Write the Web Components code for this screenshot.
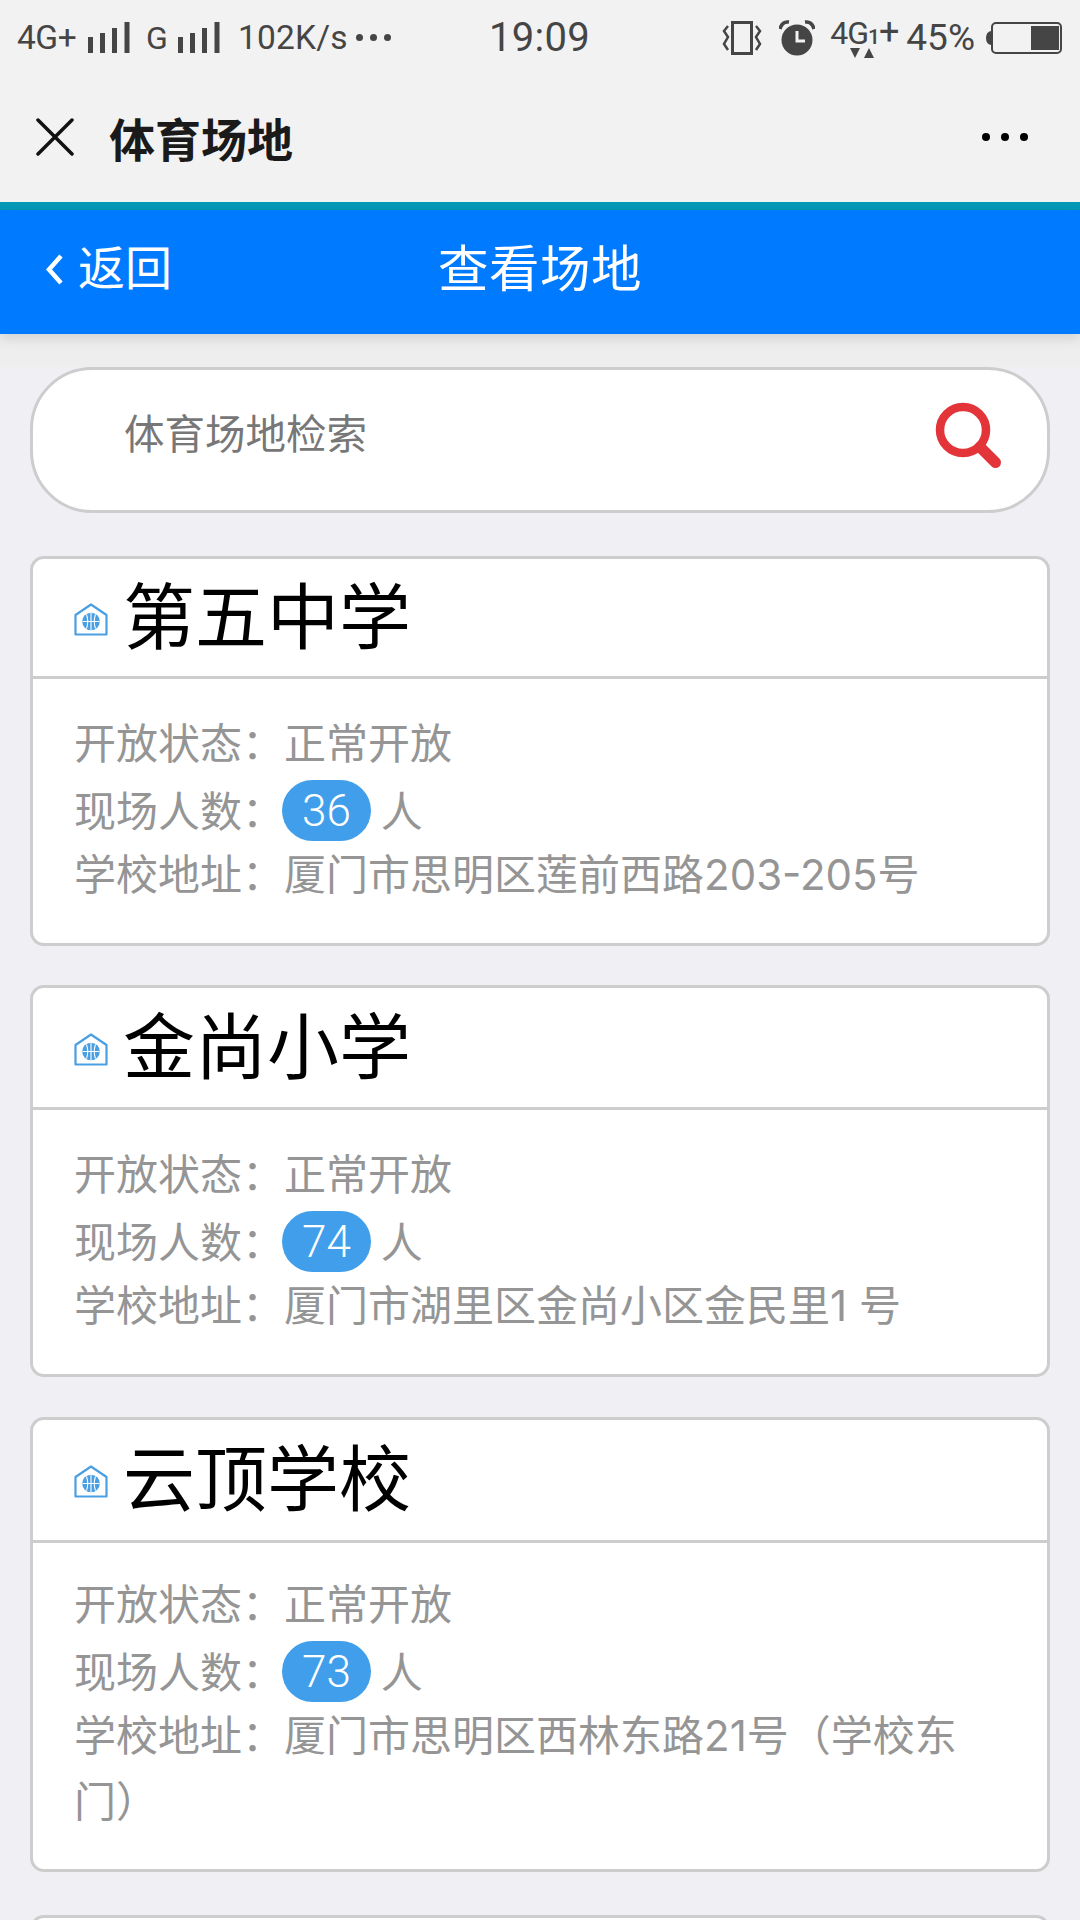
<!DOCTYPE html>
<html lang="zh-CN">
<head>
<meta charset="utf-8">
<title>体育场地</title>
<style>
  html,body{margin:0;padding:0;background:#efeff4;}
  body{width:1080px;height:1920px;overflow:hidden;font-family:"Noto Sans CJK SC","Noto Sans",sans-serif;}
</style>
</head>
<body>
<app-shell>
  <status-bar></status-bar>
  <wx-nav>体育场地</wx-nav>
  <page-header back="返回">查看场地</page-header>
  <venue-list>
    <search-box placeholder="体育场地检索"></search-box>
    <venue-card count="36" head="117" pad="29" end="37">
      <span slot="name">第五中学</span>
      <span slot="address">厦门市思明区莲前西路203-205号</span>
    </venue-card>
    <venue-card count="74" head="119" pad="29" end="37" style="margin-bottom:1px">
      <span slot="name">金尚小学</span>
      <span slot="address">厦门市湖里区金尚小区金民里1 号</span>
    </venue-card>
    <venue-card count="73" head="120" pad="26" end="36" style="margin-bottom:4px">
      <span slot="name">云顶学校</span>
      <span slot="address">厦门市思明区西林东路21号（学校东门）</span>
    </venue-card>
    <venue-card blank head="117"></venue-card>
  </venue-list>
</app-shell>
<script>
function define(name, html){
  customElements.define(name, class extends HTMLElement{
    constructor(){
      super();
      const root=this.attachShadow({mode:'open'});
      root.innerHTML=typeof html==='function'?html(this):html;
    }
  });
}
define('app-shell',`<style>:host{display:flex;flex-direction:column;width:1080px;height:1920px;overflow:hidden;background:#efeff4}::slotted(*){flex:none}</style><slot></slot>`);

const bars=`<svg width="42" height="31" viewBox="0 0 42 31" fill="#454545"><rect x="0" y="15" width="5" height="16"/><rect x="12" y="11" width="5" height="20"/><rect x="24" y="6" width="5" height="25"/><rect x="36.500" y="0" width="5" height="31"/></svg>`;

define('status-bar',`<style>
:host{display:grid;grid-template-columns:1fr auto 1fr;align-items:center;box-sizing:border-box;height:75px;padding:0 18px 0 17px;background:#f2f2f2;color:#454545;font-family:Roboto,"Liberation Sans",sans-serif;font-size:33.500px}
.l,.r{display:flex;align-items:center}
.r{justify-content:flex-end}
.clock{font-size:40px;letter-spacing:.3px}
.lte{letter-spacing:-.5px;width:71px;white-space:nowrap}
.g{width:31px;margin-left:16px;font-size:32px;margin-right:1px}
.sp{margin-left:18px;letter-spacing:.2px}
.dots{margin-left:8px;display:flex;gap:7px}
.dots i{width:7px;height:7px;border-radius:50%;background:#454545}
.net{position:relative;margin:-6px 0 0 15px;width:66px;height:44px;font-size:32px;line-height:38px;letter-spacing:-1px;white-space:nowrap}
.net small{font-size:21px;letter-spacing:0;font-weight:500}
.net b{font-weight:400;font-size:36px;letter-spacing:0;margin-left:-1px}
.net svg{position:absolute;left:20px;top:35px}
.pct{margin-left:10px;font-size:37px}
svg{display:block}
</style>
<div class="l"><span class="lte">4G+</span>${bars}<span class="g">G</span>${bars}<span class="sp">102K/s</span><span class="dots"><i></i><i></i><i></i></span></div>
<div class="clock">19:09</div>
<div class="r">
<svg width="40" height="34" viewBox="0 0 40 34" fill="none" stroke="#454545"><rect x="10.500" y="1.500" width="19" height="31" stroke-width="3"/><path d="M6 5 L2 10 L6 16 L2 23 L6 29 M34 5 L38 10 L34 16 L38 23 L34 29" stroke-width="2.500"/></svg>
<svg style="margin-left:17px" width="36" height="36" viewBox="0 0 36 36"><circle cx="18" cy="20" r="15.500" fill="#454545"/><path d="M18 11v10h8" fill="none" stroke="#f2f2f2" stroke-width="3"/><path d="M1 9 Q3 1 10 2 M35 9 Q33 1 26 2" fill="none" stroke="#454545" stroke-width="3.500"/></svg>
<span class="net">4G<small>1</small><b>+</b><svg width="34" height="11" viewBox="0 0 34 11" fill="#454545"><path d="M0 0h10L5 10z"/><path d="M14 10h10L19 0z"/></svg></span>
<span class="pct">45%</span>
<svg style="margin-left:10px" width="77" height="32" viewBox="0 0 77 32"><path d="M6 9 Q1 10 1 16 Q1 22 6 23z" fill="#454545"/><rect x="7" y="1" width="69" height="30" rx="4" fill="none" stroke="#454545" stroke-width="2"/><rect x="46" y="4" width="28" height="24" fill="#454545"/></svg>
</div>`);

define('wx-nav',`<style>
:host{display:flex;align-items:center;box-sizing:border-box;height:127px;padding:0 52px 4px 36px;background:#f2f2f2;color:#1a1a1a}
svg{display:block;flex:none}
.t{margin-left:35px;font-size:46px;font-weight:700;line-height:60px;flex:1}
.more{display:flex;gap:11px}
.more i{width:8px;height:8px;border-radius:50%;background:#000}
</style>
<svg width="38" height="38" viewBox="0 0 38 38" stroke="#111" stroke-width="3.500" stroke-linecap="round"><path d="M2 2 36 36M36 2 2 36"/></svg>
<span class="t"><slot></slot></span>
<span class="more"><i></i><i></i><i></i></span>`);

define('page-header',el=>`<style>
:host{display:block;height:165px;background:#eeeeee}
.accent{height:8px;background:#0599b8}
.bar{display:grid;grid-template-columns:1fr auto 1fr;align-items:center;height:124px;background:#007aff;color:#fff;box-shadow:0 4px 12px rgba(0,0,0,.13);box-sizing:border-box;padding-bottom:15px}
.back{display:flex;align-items:center;padding-left:45px;font-size:47px;line-height:60px}
.back svg{margin-right:14px;margin-top:10px}
.title{font-size:50.500px;line-height:70px;letter-spacing:.5px}
</style>
<div class="accent"></div>
<div class="bar">
<div class="back"><svg width="19" height="33" viewBox="0 0 19 33" fill="none" stroke="#fff" stroke-width="4.500"><path d="M16 3 4 16.500 16 30"/></svg><span>${el.getAttribute('back')}</span></div>
<div class="title"><slot></slot></div>
<div></div>
</div>`);

define('venue-list',`<style>:host{display:flex;flex-direction:column;gap:39px;padding:0 30px}::slotted(*){flex:none}</style><slot></slot>`);

define('search-box',el=>`<style>
:host{display:flex;align-items:center;box-sizing:border-box;height:146px;margin-bottom:4px;padding:0 36px 0 91px;background:#fff;border:3px solid #cdcdcd;border-radius:62px;color:#777}
.p{flex:1;font-size:40.500px;line-height:60px;padding-bottom:17px}
svg{display:block;margin-bottom:8px;position:relative;left:-8px}
</style>
<span class="p">${el.getAttribute('placeholder')}</span>
<svg width="68" height="68" viewBox="0 0 68 68" fill="none" stroke="#e33539"><circle cx="28" cy="28" r="23" stroke-width="8.500"/><path d="M45 45 60.500 60.500" stroke-width="11" stroke-linecap="round"/></svg>`);

define('venue-icon',`<style>:host{display:block;width:34px;height:33px;flex:none}svg{display:block}</style>
<svg width="34" height="33" viewBox="0 0 34 33" fill="none" stroke="#4a9fe3"><path d="M1.500 12 17 1.500 32.500 12V31.500H1.500Z" stroke-width="2.200" stroke-linejoin="round"/><circle cx="17" cy="18.500" r="8.800" fill="#4a9fe3" stroke="none"/><path d="M8.500 18.500H25.500M17 10V27M12.500 11.500Q15 18.500 12.500 25.500M21.500 11.500Q19 18.500 21.500 25.500" stroke="#fff" stroke-width="1.100"/></svg>`);

define('venue-card',el=>`<style>
:host{display:block;box-sizing:border-box;background:#fff;border:3px solid #cdcdcd;border-radius:14px;overflow:hidden}
.h{display:flex;align-items:center;box-sizing:border-box;height:${+el.getAttribute('head')+3}px;padding:0 0 12px 41px;color:#000;font-size:72px;line-height:90px;border-bottom:3px solid #cdcdcd}
.h venue-icon{margin:15px 15px 0 0}
.b{padding:${el.getAttribute('pad')}px 46px ${el.getAttribute('end')}px 41px;color:#959595;font-size:42px;line-height:66px}
.row{display:flex;align-items:center;height:66px;margin:2px 0 -2px}
.num{box-sizing:border-box;display:flex;align-items:center;justify-content:center;height:61px;margin:3px 10px 0 -2px;padding:0 20px;border-radius:31px;background:#409eea;color:#fff;font:300 44px/60px Roboto,"Liberation Sans",sans-serif}
.addr{font-family:Inter,"Noto Sans CJK SC",sans-serif;margin:2px 0 -2px}
.lab{font-family:"Noto Sans CJK SC",sans-serif;line-height:0}
</style>
<div class="h"><venue-icon></venue-icon><slot name="name"></slot></div>
${el.hasAttribute('blank')?'':`<div class="b">
<div>开放状态：正常开放</div>
<div class="row"><span>现场人数：</span><span class="num">${el.getAttribute('count')}</span><span>人</span></div>
<div class="addr"><span class="lab">学校地址：</span><slot name="address"></slot></div>
</div>`}`);
</script>
</body>
</html>
